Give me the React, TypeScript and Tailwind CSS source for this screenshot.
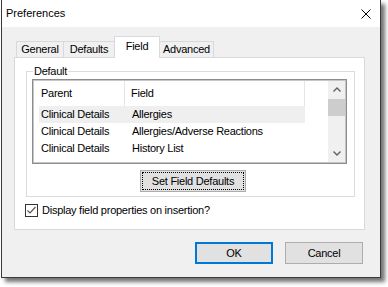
import React from "react";

const rows = [
  { parent: "Clinical Details", field: "Allergies" },
  { parent: "Clinical Details", field: "Allergies/Adverse Reactions" },
  { parent: "Clinical Details", field: "History List" },
];

const tabs = ["General", "Defaults", "Field", "Advanced"];
const tabWidths: Record<string, string> = {
  General: "w-[48px]",
  Defaults: "w-[52px] -ml-px",
  Field: "w-[46px] -ml-px",
  Advanced: "w-[55px] -ml-px",
};

function Chevron({ up }: { up?: boolean }) {
  return (
    <svg width="8" height="5" viewBox="0 0 8 5" className="block">
      <polyline
        points={up ? "0.5,4.5 4,1 7.5,4.5" : "0.5,0.5 4,4 7.5,0.5"}
        fill="none"
        stroke="#606060"
        strokeWidth="1.4"
      />
    </svg>
  );
}

export default function App() {
  return (
    <div className="w-[388px] h-[287px] bg-white pl-px font-['Liberation_Sans',Arial,sans-serif] text-[11px] leading-[13px] tracking-[-0.25px] text-black">
      <div className="w-[380px] h-[278px] flex flex-col border-x border-b border-[#3a3a3a] bg-[#f0f0f0] shadow-[4px_4px_4px_rgba(0,0,0,0.55)]">
        {/* Title bar */}
        <div className="h-[27px] bg-white flex items-center justify-between pl-[4px] pr-[9px]">
          <span className="tracking-normal">Preferences</span>
          <svg width="10" height="10" viewBox="0 0 10 10">
            <path d="M0.5 0.5 L9.5 9.5 M9.5 0.5 L0.5 9.5" stroke="#000" strokeWidth="1" />
          </svg>
        </div>

        <div className="flex-1 flex flex-col pl-[12px] pr-[15px]">
          {/* Tabs */}
          <div className="mt-[9px] h-[21px] ml-[2px] flex items-end">
            {tabs.map((t) =>
              t === "Field" ? (
                <div
                  key={t}
                  className={`${tabWidths[t]} relative z-10 h-[22px] -mb-px border border-b-0 border-[#d9d9d9] bg-white flex justify-center pt-[3px]`}
                >
                  {t}
                </div>
              ) : (
                <div
                  key={t}
                  className={`${tabWidths[t]} h-[16px] border border-b-0 border-[#d9d9d9] bg-[#f0f0f0] flex items-center justify-center`}
                >
                  {t}
                </div>
              )
            )}
          </div>

          {/* Tab panel */}
          <div className="w-[351px] h-[173px] border border-[#d9d9d9] bg-white flex flex-col">
            <fieldset className="ml-[11px] mt-[7px] w-[329px] border border-[#dcdcdc] pt-[1px] pb-[4px]">
              <legend className="ml-[6px] px-[1px]">Default</legend>

              {/* List view */}
              <div className="ml-[5px] w-[315px] h-[85px] border border-[#8c8c8c]">
                <div className="h-full border border-[#c6c6c6] flex">
                  <div className="flex-1 flex flex-col">
                    <div className="h-[25px] flex">
                      <div className="w-[91px] pl-[7px] flex items-center border-r border-[#e5e5e5]">Parent</div>
                      <div className="w-[180px] pl-[6px] flex items-center border-r border-[#e5e5e5]">Field</div>
                    </div>
                    {rows.map((r, i) => (
                      <div
                        key={r.field}
                        className={`ml-[5px] w-[266px] h-[17px] flex items-center ${i === 0 ? "bg-[#efefef]" : ""}`}
                      >
                        <div className="w-[85px] pl-[2px] whitespace-nowrap">{r.parent}</div>
                        <div className="pl-[8px] whitespace-nowrap">{r.field}</div>
                      </div>
                    ))}
                  </div>

                  {/* Scrollbar */}
                  <div className="w-[17px] bg-[#f0f0f0] flex flex-col">
                    <div className="h-[17px] flex items-center justify-center">
                      <Chevron up />
                    </div>
                    <div className="mt-[1px] h-[17px] bg-[#cdcdcd]" />
                    <div className="flex-1" />
                    <div className="h-[17px] flex items-center justify-center">
                      <Chevron />
                    </div>
                  </div>
                </div>
              </div>

              <button className="mt-[6px] ml-[113px] w-[106px] h-[22px] border border-[#adadad] bg-[#e1e1e1] p-px block">
                <span className="h-full w-full flex items-center justify-center border border-dotted border-black">
                  Set Field Defaults
                </span>
              </button>
            </fieldset>

            {/* Checkbox */}
            <label className="mt-[7px] ml-[10px] flex items-center gap-[4px]">
              <span className="w-[13px] h-[13px] border border-[#333] bg-white flex items-center justify-center">
                <svg width="11" height="11" viewBox="0 0 11 11">
                  <polyline points="1.5,5.5 4,8 9.5,2" fill="none" stroke="#555" strokeWidth="1.2" />
                </svg>
              </span>
              <span>Display field properties on insertion?</span>
            </label>
          </div>

          {/* Dialog buttons */}
          <div className="mt-[12px] flex justify-end gap-[12px] pr-[2px]">
            <button className="w-[78px] h-[22px] border-2 border-[#0078d7] bg-[#e1e1e1] flex items-center justify-center">
              OK
            </button>
            <button className="w-[78px] h-[22px] border border-[#adadad] bg-[#e1e1e1] flex items-center justify-center">
              Cancel
            </button>
          </div>
        </div>
      </div>
    </div>
  );
}
